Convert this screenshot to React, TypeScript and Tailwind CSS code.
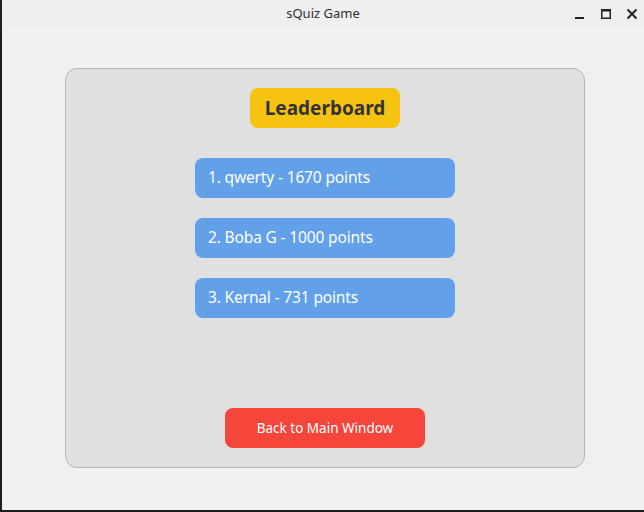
import React from 'react';

const players = [
  { rank: 1, name: 'qwerty', points: 1670 },
  { rank: 2, name: 'Boba G', points: 1000 },
  { rank: 3, name: 'Kernal', points: 731 },
];

const App = () => {
  return (
    <div
      className="w-[644px] h-[512px] flex bg-[#1e1e1e] overflow-hidden"
      style={{ fontFamily: '"Noto Sans", "Open Sans", sans-serif' }}
    >
      <div className="ml-[2px] flex-1 flex flex-col mb-[2px] bg-[#f0f0f1]">
        {/* title bar */}
        <div className="h-[28px] relative flex items-center justify-center bg-[#efeff0]">
          <span className="text-[13px] text-[#2e2e2e]">sQuiz Game</span>
          <div className="absolute right-[6px] top-0 h-full flex items-center gap-[14px] text-[#222]">
            <svg width="12" height="12" viewBox="0 0 12 12">
              <rect x="1" y="9" width="9" height="2" fill="currentColor" />
            </svg>
            <svg width="12" height="12" viewBox="0 0 12 12">
              <rect x="1.75" y="1.75" width="8.5" height="8.5" fill="none" stroke="currentColor" strokeWidth="1.5" />
              <rect x="1" y="1" width="10" height="2.5" fill="currentColor" />
            </svg>
            <svg width="12" height="12" viewBox="0 0 12 12">
              <path d="M1.5 1.5 L10.5 10.5 M10.5 1.5 L1.5 10.5" stroke="currentColor" strokeWidth="2" />
            </svg>
          </div>
        </div>

        {/* content */}
        <div className="flex-1 pt-[40px] pl-[63px]">
          <div className="w-[520px] h-[400px] rounded-[12px] border border-[#b4b4b4] bg-[#e0e0e0] flex flex-col items-center pt-[19px] pb-[19px]">
            <div className="w-[150px] h-[40px] rounded-[8px] bg-[#f6c313] flex items-center justify-center">
              <span className="text-[19px] font-bold text-[#333333]">Leaderboard</span>
            </div>

            <div className="mt-[30px] flex flex-col gap-[20px]">
              {players.map((p) => (
                <div
                  key={p.rank}
                  className="w-[260px] h-[40px] rounded-[8px] bg-[#62a0ea] flex items-center pl-[13px]"
                >
                  <span className="text-[15.5px] tracking-[-0.15px] text-white">
                    {p.rank}. {p.name} - {p.points} points
                  </span>
                </div>
              ))}
            </div>

            <div className="flex-1" />

            <button className="w-[200px] h-[40px] rounded-[8px] bg-[#f6453a] text-white text-[13.5px]">
              Back to Main Window
            </button>
          </div>
        </div>
      </div>
    </div>
  );
};

export default App;
